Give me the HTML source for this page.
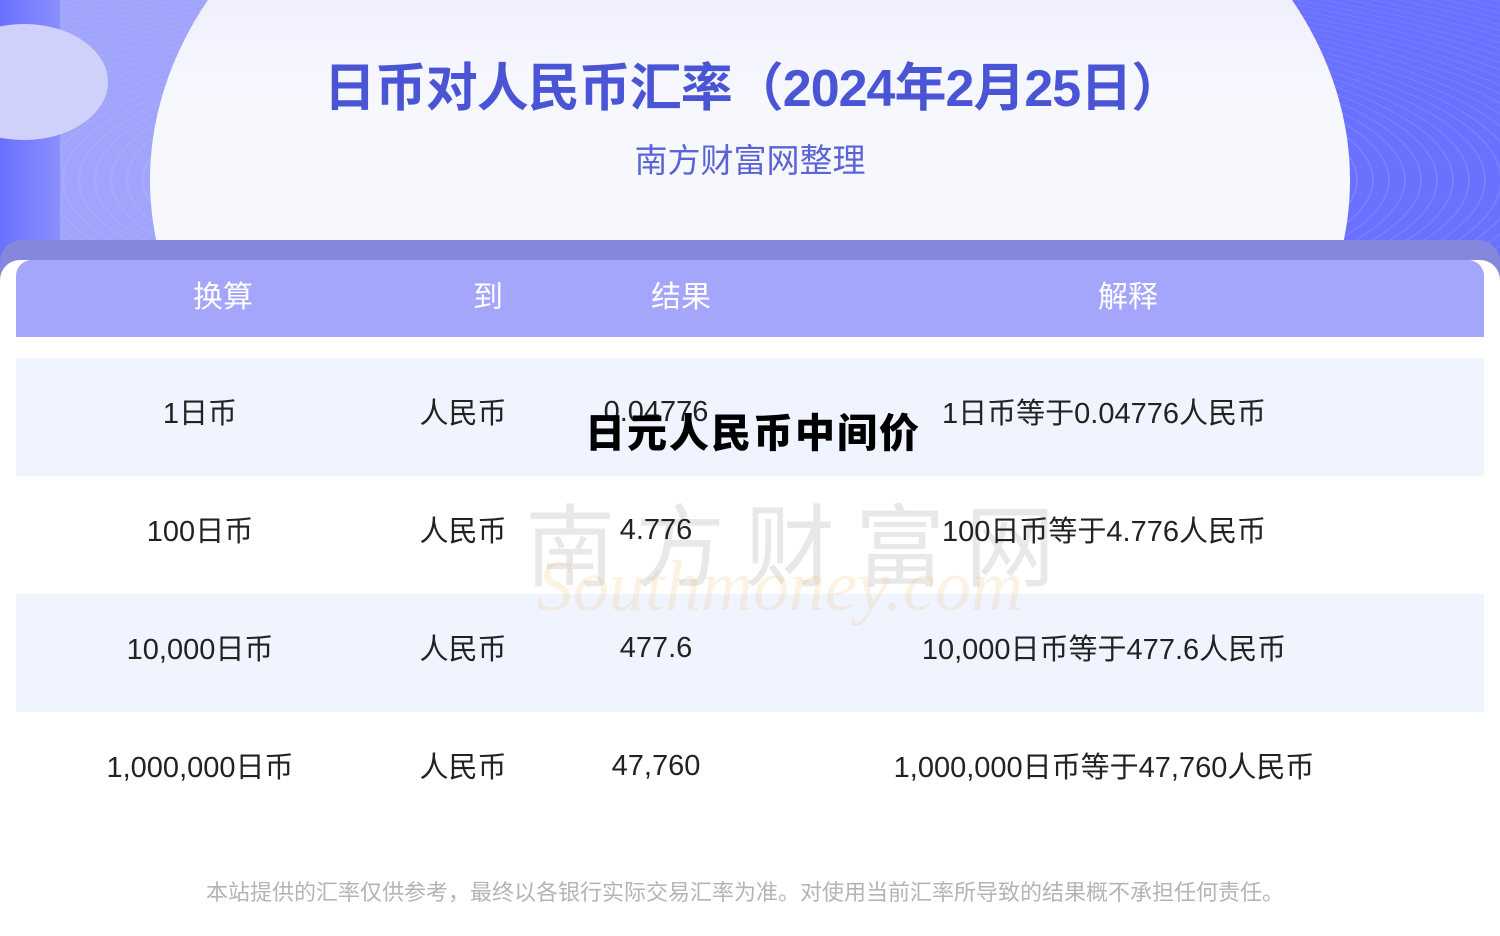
<!DOCTYPE html><html><head><meta charset="utf-8"><style>
body{margin:0;width:1500px;height:936px;position:relative;overflow:hidden;background:#fff;font-family:"Liberation Sans","Noto Sans CJK SC",sans-serif}
.bg{position:absolute;left:0;top:0;width:1500px;height:280px;background:repeating-radial-gradient(ellipse at 750px 180px,#6a70ff 0 14px,#7a80ff 14px 16px);overflow:hidden}
.bgl{position:absolute;left:0;top:0;width:750px;height:280px;background:repeating-radial-gradient(ellipse at 750px 180px,#a0a4fa 0 14px,#a8acfb 14px 16px)}
.bgl2{position:absolute;left:0;top:0;width:60px;height:280px;background:linear-gradient(90deg,#6a70ff,#8a8ffd)}
.el{position:absolute;left:150px;top:-240px;width:1200px;height:840px;border-radius:50%;background:linear-gradient(#dcdcfb,#f7f8fe 40%,#f6f7fe)}
.sm{position:absolute;left:-60px;top:24px;width:168px;height:116px;border-radius:50%;background:#cfd1fb}
.band{position:absolute;left:0;top:240px;width:1500px;height:60px;background:#8388dc;border-radius:22px 22px 0 0}
.card{position:absolute;left:0;top:260px;width:1500px;height:676px;background:#fff;border-radius:20px 20px 0 0}
.hd{position:absolute;left:16px;top:260px;width:1468px;height:77px;background:#a3a6fb;border-radius:16px 16px 0 0}
.t{position:absolute;transform:translateX(-50%);white-space:nowrap}
.h{color:#fff;font-size:30px;top:272px}
.row{position:absolute;left:16px;width:1468px;height:118px}
.c{font-size:29px;color:#222;line-height:40px}
</style></head><body>
<div class="bg"><div class="bgl"></div><div class="bgl2"></div></div>
<div class="el"></div><div class="sm"></div>
<div class="t" style="left:753px;top:46px;font-size:52px;font-weight:bold;color:#4a55d6;letter-spacing:-1px">日币对人民币汇率（2024年2月25日）</div>
<div class="t" style="left:750px;top:134px;font-size:33px;color:#5a64d6">南方财富网整理</div>
<div class="band"></div><div class="card"></div><div class="hd"></div>
<div class="t h" style="left:223px">换算</div><div class="t h" style="left:488px">到</div><div class="t h" style="left:681px">结果</div><div class="t h" style="left:1128px">解释</div>
<div class="row" style="top:358px;background:#eff4fe"></div>
<div class="row" style="top:594px;background:#eff4fe"></div>
<div class="t" style="left:800px;top:475px;font-size:90px;color:rgba(130,130,130,.18);letter-spacing:20px">南方财富网</div>
<div class="t" style="left:780px;top:545px;font-size:72px;font-style:italic;font-family:'Liberation Serif',serif;color:rgba(240,190,120,.2)">Southmoney.com</div>
<div class="t c" style="left:200px;top:394px">1日币</div><div class="t c" style="left:463px;top:394px">人民币</div><div class="t c" style="left:656px;top:392px">0.04776</div><div class="t c" style="left:1104px;top:394px">1日币等于0.04776人民币</div>
<div class="t c" style="left:200px;top:512px">100日币</div><div class="t c" style="left:463px;top:512px">人民币</div><div class="t c" style="left:656px;top:510px">4.776</div><div class="t c" style="left:1104px;top:512px">100日币等于4.776人民币</div>
<div class="t c" style="left:200px;top:630px">10,000日币</div><div class="t c" style="left:463px;top:630px">人民币</div><div class="t c" style="left:656px;top:628px">477.6</div><div class="t c" style="left:1104px;top:630px">10,000日币等于477.6人民币</div>
<div class="t c" style="left:200px;top:748px">1,000,000日币</div><div class="t c" style="left:463px;top:748px">人民币</div><div class="t c" style="left:656px;top:746px">47,760</div><div class="t c" style="left:1104px;top:748px">1,000,000日币等于47,760人民币</div>
<div class="t" style="left:753px;top:401px;font-size:40px;font-weight:900;color:#000;letter-spacing:2px">日元人民币中间价</div>
<div class="t" style="left:745px;top:875px;font-size:22px;color:#b4b4b4">本站提供的汇率仅供参考，最终以各银行实际交易汇率为准。对使用当前汇率所导致的结果概不承担任何责任。</div>
</body></html>
